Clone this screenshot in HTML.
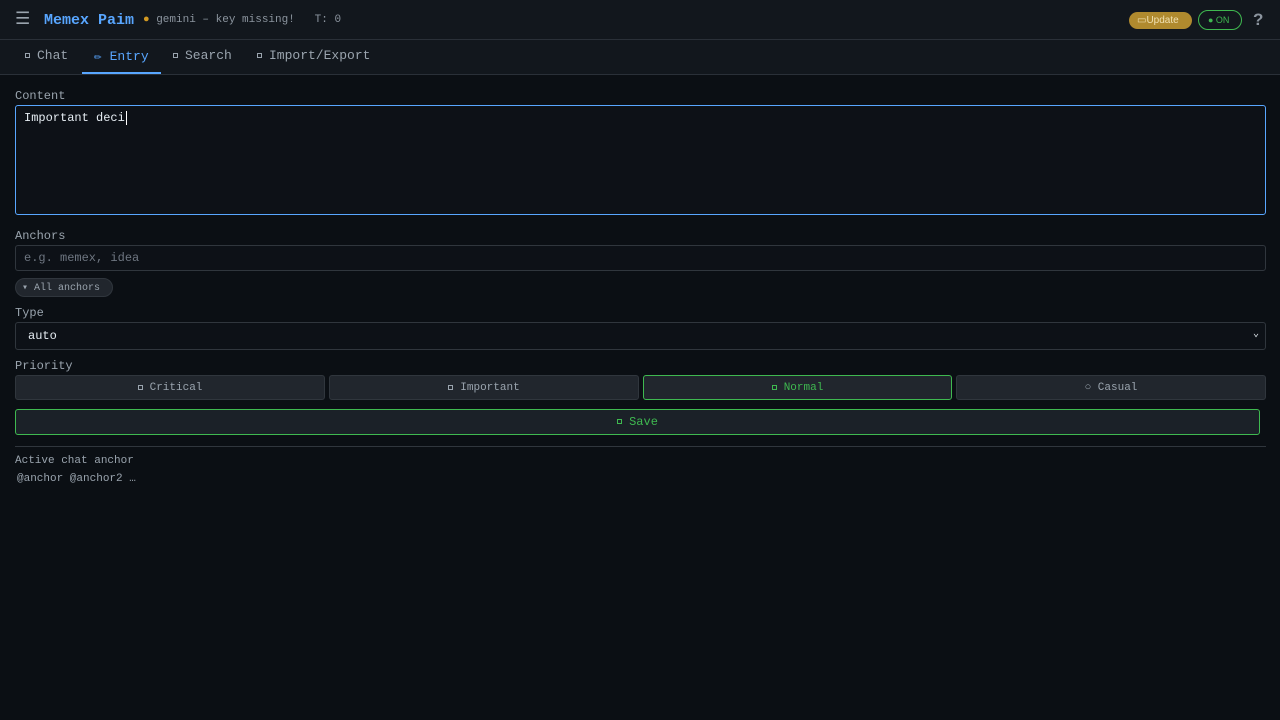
<!DOCTYPE html>
<html><head><meta charset="utf-8"><style>
*{box-sizing:border-box;margin:0;padding:0}
body{width:1280px;height:720px;background:#0b0f14;font-family:"Liberation Mono",monospace;color:#c9d1d9;overflow:hidden;position:relative}
.hdr{position:absolute;left:0;top:0;width:1280px;height:40px;background:#12171d;border-bottom:1px solid #2a3038}
.tabs{position:absolute;left:0;top:40px;width:1280px;height:35px;background:#12171d;border-bottom:1px solid #2a3038}
.a{position:absolute;white-space:nowrap}
.sq{display:inline-block;width:5px;height:5px;border:1px solid currentColor;margin-right:7px;vertical-align:middle}
.lbl{font-size:12px;color:#9aa4ae}
.box{position:absolute;border:1px solid #30363d;border-radius:3px;background:#0d1117}
.pb{position:absolute;top:375px;height:25px;background:#21262d;border:1px solid #30363d;border-radius:3px;font-size:11px;color:#9aa4ae;text-align:center;line-height:25px}
</style></head><body>
<div class="hdr"></div>
<div class="a" style="left:15px;top:9px;font-size:17px;color:#9aa4ae;font-family:'DejaVu Sans',sans-serif">☰</div>
<div class="a" style="left:44px;top:12px;font-size:15px;font-weight:bold;color:#58a6ff">Memex Paim</div>
<div class="a" style="left:143px;top:14px;font-size:11px;color:#8b949e"><span style="color:#d29922">●</span> gemini – key missing!&nbsp;&nbsp;&nbsp;T: 0</div>
<div class="a" style="left:1129px;top:12px;width:63px;height:17px;background:#b08a2e;border-radius:9px;font-family:'Liberation Sans',sans-serif;font-size:10px;color:#f0e0b0;line-height:17px;padding-left:8px">▭Update</div>
<div class="a" style="left:1198px;top:10px;width:44px;height:20px;border:1px solid #3fb950;border-radius:10px;font-family:'Liberation Sans',sans-serif;font-size:9px;color:#3fb950;line-height:18px;padding-left:9px">●&nbsp;ON</div>
<div class="a" style="left:1253px;top:10px;font-size:17px;font-weight:bold;color:#8b949e;font-family:'Liberation Sans',sans-serif">?</div>
<div class="tabs"></div>
<div class="a" style="left:25px;top:48px;font-size:13px;color:#9aa4ae"><span class="sq"></span>Chat</div>
<div class="a" style="left:94px;top:49px;font-size:13px;color:#58a6ff">✏ Entry</div>
<div class="a" style="left:82px;top:72px;width:79px;height:2px;background:#58a6ff"></div>
<div class="a" style="left:173px;top:48px;font-size:13px;color:#9aa4ae"><span class="sq"></span>Search</div>
<div class="a" style="left:257px;top:48px;font-size:13px;color:#9aa4ae"><span class="sq"></span>Import/Export</div>
<div class="a lbl" style="left:15px;top:89px">Content</div>
<div class="box" style="left:15px;top:105px;width:1251px;height:110px;border-color:#58a6ff"></div>
<div class="a" style="left:24px;top:111px;font-size:12px;color:#e6edf3">Important deci<span style="border-left:1px solid #fff;margin-left:1px"></span></div>
<div class="a lbl" style="left:15px;top:229px">Anchors</div>
<div class="box" style="left:15px;top:245px;width:1251px;height:26px"></div>
<div class="a" style="left:24px;top:251px;font-size:12px;color:#6e7681">e.g. memex, idea</div>
<div class="a" style="left:15px;top:278px;width:98px;height:19px;background:#21262d;border:1px solid #30363d;border-radius:10px;font-size:10px;color:#9aa4ae;line-height:19px;padding-left:6px">▾ All anchors</div>
<div class="a lbl" style="left:15px;top:306px">Type</div>
<div class="box" style="left:15px;top:322px;width:1251px;height:28px"></div>
<div class="a" style="left:28px;top:329px;font-size:12px;color:#e6edf3">auto</div>
<div class="a" style="left:1253px;top:328px;font-size:10px;color:#e6edf3">⌄</div>
<div class="a lbl" style="left:15px;top:359px">Priority</div>
<div class="pb" style="left:15px;width:310px"><span class="sq"></span>Critical</div>
<div class="pb" style="left:329px;width:310px"><span class="sq"></span>Important</div>
<div class="pb" style="left:643px;width:309px;border-color:#3fb950;color:#3fb950"><span class="sq"></span>Normal</div>
<div class="pb" style="left:956px;width:310px">○ Casual</div>
<div class="a" style="left:15px;top:409px;width:1245px;height:26px;background:#1b2128;border:1px solid #3fb950;border-radius:3px;font-size:12px;color:#3fb950;text-align:center;line-height:24px"><span class="sq"></span>Save</div>
<div class="a" style="left:15px;top:446px;width:1251px;height:1px;background:#30363d"></div>
<div class="a" style="left:15px;top:455px;font-size:11px;color:#9aa4ae">Active chat anchor</div>
<div class="a" style="left:17px;top:473px;font-size:11px;color:#9aa4ae">@anchor @anchor2 …</div>
</body></html>
